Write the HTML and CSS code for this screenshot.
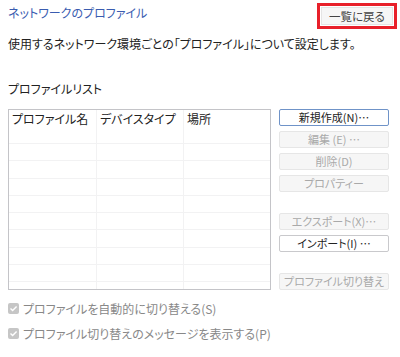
FILE: index.html
```html
<!DOCTYPE html>
<html lang="ja">
<head>
  <meta charset="UTF-8" />
  <title>ネットワークのプロファイル</title>
  <link rel="stylesheet" href="styles.css">
</head>
<body>
  <div class="page">
    <div class="top">
      <div class="title">ネットワークのプロファイル</div>
      <div class="back-frame">
        <button class="back-button">一覧に戻る</button>
      </div>
    </div>

    <p class="desc">使用するネットワーク環境ごとの「プロファイル」について設定します。</p>

    <div class="list-label">プロファイルリスト</div>

    <div class="list-area">
      <div class="list">
        <div class="row head">
          <div class="cell">プロファイル名</div>
          <div class="cell">デバイスタイプ</div>
          <div class="cell">場所</div>
        </div>
        <div class="row"><div class="cell"></div><div class="cell"></div><div class="cell"></div></div>
        <div class="row"><div class="cell"></div><div class="cell"></div><div class="cell"></div></div>
        <div class="row"><div class="cell"></div><div class="cell"></div><div class="cell"></div></div>
        <div class="row"><div class="cell"></div><div class="cell"></div><div class="cell"></div></div>
        <div class="row"><div class="cell"></div><div class="cell"></div><div class="cell"></div></div>
        <div class="row"><div class="cell"></div><div class="cell"></div><div class="cell"></div></div>
        <div class="row"><div class="cell"></div><div class="cell"></div><div class="cell"></div></div>
        <div class="row"><div class="cell"></div><div class="cell"></div><div class="cell"></div></div>
        <div class="row last"><div class="cell"></div><div class="cell"></div><div class="cell"></div></div>
      </div>

      <div class="actions">
        <button class="btn focus">新規作成(N)…</button>
        <button class="btn" disabled>編集 (E) …</button>
        <button class="btn" disabled>削除(D)</button>
        <button class="btn" disabled>プロパティー</button>
        <button class="btn gap" disabled>エクスポート(X)…</button>
        <button class="btn">インポート(I) …</button>
        <button class="btn gap" disabled>プロファイル切り替え</button>
      </div>
    </div>

    <label class="check">
      <span class="box">
        <svg width="11" height="11" viewBox="0 0 11 11"><path d="M2.5 5.6 L4.6 7.6 L8.6 3.4" fill="none" stroke="#fff" stroke-width="1.4"/></svg>
      </span>
      プロファイルを自動的に切り替える(S)
    </label>
    <label class="check">
      <span class="box">
        <svg width="11" height="11" viewBox="0 0 11 11"><path d="M2.5 5.6 L4.6 7.6 L8.6 3.4" fill="none" stroke="#fff" stroke-width="1.4"/></svg>
      </span>
      プロファイル切り替えのメッセージを表示する(P)
    </label>
  </div>
</body>
</html>
```

FILE: styles.css
```css
body {
  margin: 0;
  background-color: #fff;
  font-family: "Noto Sans CJK JP", "Noto Sans", sans-serif;
  font-size: 12px;
  font-feature-settings: "palt";
  color: #222;
}

.page {
  padding: 0 8px;
}

.top {
  display: flex;
  justify-content: space-between;
  align-items: flex-start;
  height: 32px;
}

.title {
  color: #3a5cb0;
  margin-top: 4px;
  line-height: 18px;
}

.back-frame {
  margin-top: 3px;
  margin-right: -5px;
  border: 3px solid #e8202a;
  padding: 1px;
  width: 72px;
  height: 18px;
}

.back-button {
  width: 100%;
  height: 100%;
  font-family: inherit;
  font-size: 11.5px;
  font-feature-settings: "palt";
  color: #444;
  background-color: #f6f6f6;
  border: 1px solid #e4e4e4;
  padding: 0;
}

.desc {
  margin: 3px 0 0;
  line-height: 18px;
}

.list-label {
  margin-top: 27px;
  line-height: 18px;
}

.list-area {
  display: flex;
  margin-top: 11px;
}

.list {
  width: 261px;
  height: 179px;
  border: 1px solid #c4c4c8;
  overflow: hidden;
}

.row {
  display: grid;
  grid-template-columns: 88px 87px 1fr;
  height: 16.3px;
  border-bottom: 1px solid #f2f2f3;
}

.row.head {
  height: 33px;
}

.cell {
  border-right: 1px solid #f2f2f3;
  padding: 0 0 0 3px;
  line-height: 18px;
}

.cell:last-child {
  border-right: none;
}

.actions {
  display: flex;
  flex-direction: column;
  gap: 5px;
  margin-left: 8px;
}

.btn {
  width: 110px;
  height: 17px;
  padding: 0;
  font-family: inherit;
  font-size: 11px;
  font-feature-settings: "palt";
  line-height: 15px;
  color: #222;
  background-color: #fff;
  border: 1px solid #c9c9cc;
  border-radius: 2px;
}

.btn.focus {
  border-color: #6f93c8;
}

.btn:disabled {
  color: #a9a9a9;
  background-color: #f6f6f6;
  border-color: #e6e6e6;
}

.btn.gap {
  margin-top: 16px;
}

.check {
  display: flex;
  align-items: center;
  gap: 4px;
  color: #888;
  height: 18px;
}

.check:first-of-type {
  margin-top: 9px;
}

.check + .check {
  margin-top: 7px;
}

.box {
  width: 11px;
  height: 11px;
  background-color: #c6c6c6;
  border-radius: 2px;
  display: flex;
}
```
